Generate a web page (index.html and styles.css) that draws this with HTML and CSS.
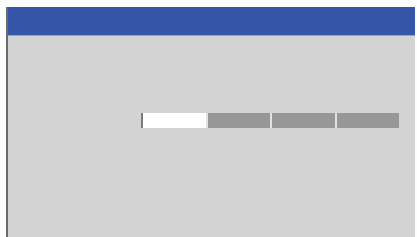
FILE: index.html
```html
<!DOCTYPE html>
<html lang="en">
<head>
  <meta charset="UTF-8">
  <title>Progress</title>
  <link rel="stylesheet" href="styles.css">
</head>
<body>
  <div class="window">
    <div class="titlebar"></div>
    <div class="content">
      <div class="progress">
        <div class="seg done"></div>
        <div class="seg"></div>
        <div class="seg"></div>
        <div class="seg"></div>
      </div>
    </div>
  </div>
</body>
</html>
```

FILE: styles.css
```css
* {
  margin: 0;
  padding: 0;
  box-sizing: border-box;
}

body {
  background-color: #fdfdfd;
  font-family: "Liberation Sans", Arial, sans-serif;
  padding: 7px 2px 0 6px;
  height: 237px;
  overflow: hidden;
}

.window {
  height: 230px;
  border-left: 2px solid #6b6b6b;
  background-color: #d3d3d3;
}

.titlebar {
  height: 29px;
  background-color: #3556a8;
  border-bottom: 1px solid #8fa2cf;
}

.content {
  padding: 77px 0 0 133px;
}

.progress {
  display: flex;
  gap: 2px;
  width: 258px;
  height: 15px;
  border-left: 2px solid #7a7a7a;
  background-color: #e2e2e2;
}

.seg {
  flex: 1;
  background-color: #979797;
}

.seg.done {
  background-color: #ffffff;
}
```
